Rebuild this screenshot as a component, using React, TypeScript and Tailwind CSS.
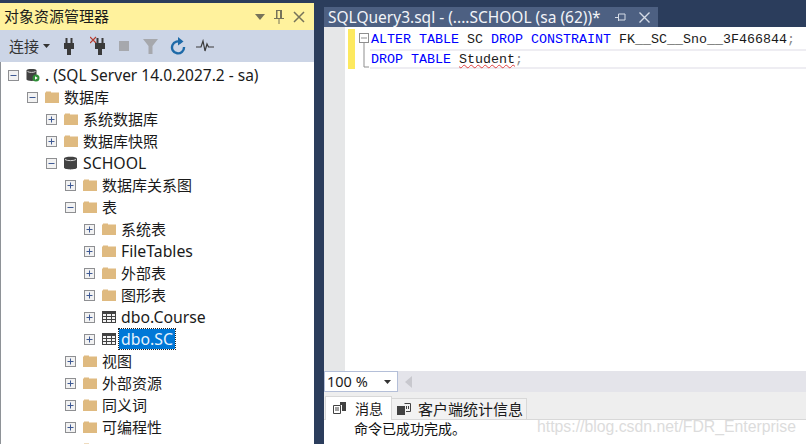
import React from "react";

const font = { fontFamily: '"Noto Sans","Noto Sans CJK SC",sans-serif' };

function Expander({ open }: { open?: boolean }) {
  return (
    <svg width="11" height="11" viewBox="0 0 11 11" className="shrink-0">
      <rect x="0.5" y="0.5" width="10" height="10" fill="#f2f2f2" stroke="#8e8f92" />
      <path d={open ? "M2.5 5.5H8.5" : "M2.5 5.5H8.5M5.5 2.5V8.5"} stroke="#3f5a94" strokeWidth="1" />
    </svg>
  );
}

function Folder() {
  return (
    <svg width="14" height="12" viewBox="0 0 14 12" className="shrink-0">
      <path d="M0 1.5H1V0.5H6V1.5H14V12H0Z" fill="#dfba80" />
    </svg>
  );
}

function Server() {
  return (
    <svg width="14" height="14" viewBox="0 0 14 14" className="shrink-0">
      <path d="M0.5 2.5C0.5 0.6 10.5 0.6 10.5 2.5V11.5C10.5 13.4 0.5 13.4 0.5 11.5Z" fill="#424242" />
      <path d="M1.5 3.5C3 4.7 8 4.7 9.5 3.5" stroke="#d8d8d8" strokeWidth="1" fill="none" />
      <circle cx="10" cy="10" r="3.5" fill="#2f8f37" />
      <path d="M9 8.2V11.8L11.8 10Z" fill="#fff" />
    </svg>
  );
}

function Db() {
  return (
    <svg width="13" height="14" viewBox="0 0 13 14" className="shrink-0">
      <path d="M0 2.5C0 0 13 0 13 2.5V11.5C13 14 0 14 0 11.5Z" fill="#424242" />
      <path d="M1 3.5C3 5 10 5 12 3.5" stroke="#d8d8d8" strokeWidth="1" fill="none" />
    </svg>
  );
}

function TableIcon() {
  return (
    <svg width="14" height="12" viewBox="0 0 14 12" className="shrink-0">
      <rect x="0" y="0" width="14" height="12" fill="#424242" />
      <path d="M1 3H4V5H1ZM5 3H9V5H5ZM10 3H13V5H10ZM1 6H4V8H1ZM5 6H9V8H5ZM10 6H13V8H10ZM1 9H4V11H1ZM5 9H9V11H5ZM10 9H13V11H10Z" fill="#f4f4f4" />
    </svg>
  );
}

type Row = { level: number; label: string; open?: boolean; icon: "db" | "server" | "folder" | "table"; selected?: boolean; latin?: boolean };

const rows: Row[] = [
  { level: 0, label: ". (SQL Server 14.0.2027.2 - sa)", open: true, icon: "server" },
  { level: 1, label: "数据库", open: true, icon: "folder" },
  { level: 2, label: "系统数据库", icon: "folder" },
  { level: 2, label: "数据库快照", icon: "folder" },
  { level: 2, label: "SCHOOL", open: true, icon: "db", latin: true },
  { level: 3, label: "数据库关系图", icon: "folder" },
  { level: 3, label: "表", open: true, icon: "folder" },
  { level: 4, label: "系统表", icon: "folder" },
  { level: 4, label: "FileTables", icon: "folder", latin: true },
  { level: 4, label: "外部表", icon: "folder" },
  { level: 4, label: "图形表", icon: "folder" },
  { level: 4, label: "dbo.Course", icon: "table", latin: true },
  { level: 4, label: "dbo.SC", icon: "table", selected: true, latin: true },
  { level: 3, label: "视图", icon: "folder" },
  { level: 3, label: "外部资源", icon: "folder" },
  { level: 3, label: "同义词", icon: "folder" },
  { level: 3, label: "可编程性", icon: "folder" },
  { level: 3, label: "", icon: "folder" },
];

const indent = ["pl-[7px]", "pl-[26px]", "pl-[45px]", "pl-[64px]", "pl-[83px]"];

function TreeRow({ r }: { r: Row }) {
  return (
    <div className={`flex h-[22px] shrink-0 items-center ${indent[r.level]}`}>
      <Expander open={r.open} />
      <span className="ml-[7px] flex w-[15px] justify-start">
        {r.icon === "folder" && <Folder />}
        {r.icon === "table" && <TableIcon />}
        {r.icon === "db" && <Db />}
        {r.icon === "server" && <Server />}
      </span>
      <span
        className={`whitespace-nowrap leading-[20px] ${r.latin ? "text-[15.8px]" : r.level === 0 ? "text-[15.5px]" : "text-[15px]"} ${
          r.selected ? "ml-[2px] bg-[#0078d7] px-[2px] text-[#e8f3fc] outline-1 outline-[#222] outline-dotted" : "ml-[4px] text-[#1a1a1a]"
        }`}
      >
        {r.label}
      </span>
    </div>
  );
}

function Plug({ x }: { x?: boolean }) {
  return (
    <svg width="20" height="20" viewBox="0 0 20 20" className="shrink-0">
      {x && <path d="M0 1L6 7M6 1L0 7" stroke="#b5392c" strokeWidth="1.2" />}
      <path d="M7.5 2V7M12.5 2V7" stroke="#3a3a3a" strokeWidth="2" />
      <path d="M5 7H15V13H12V19H8V13H5Z" fill="#3a3a3a" />
    </svg>
  );
}

export default function App() {
  return (
    <div className="flex h-[444px] w-[806px] overflow-hidden bg-[#2b3d5c]" style={font}>
      {/* Left panel */}
      <div className="flex h-full w-[314px] shrink-0 flex-col pt-[3px]">
        <div className="flex h-[27px] shrink-0 items-center justify-between bg-[#fff29d] pl-[4px] pr-[9px]">
          <span className="text-[15px] text-[#1a1a1a]">对象资源管理器</span>
          <div className="flex items-center gap-[9px]">
            <svg width="10" height="6" viewBox="0 0 10 6"><path d="M0 0H10L5 6Z" fill="#76735a" /></svg>
            <svg width="10" height="14" viewBox="0 0 10 14"><path d="M2 0H8V8H10V9H5.5V14H4.5V9H0V8H2ZM3.5 1V8H6V1Z" fill="#76735a" /></svg>
            <svg width="12" height="12" viewBox="0 0 12 12"><path d="M1 1L11 11M11 1L1 11" stroke="#76735a" strokeWidth="1.5" /></svg>
          </div>
        </div>
        <div className="flex h-[32px] shrink-0 items-center bg-[#ccd5e6] pl-[9px] text-[#333]">
          <span className="text-[15px]">连接</span>
          <svg width="7" height="4" viewBox="0 0 7 4" className="ml-[4px]"><path d="M0 0H7L3.5 4Z" fill="#333" /></svg>
          <span className="ml-[9px]"><Plug /></span>
          <span className="ml-[11px]"><Plug x /></span>
          <span className="ml-[9px] h-[10px] w-[10px] bg-[#a6a8ad]" />
          <svg width="15" height="16" viewBox="0 0 15 16" className="ml-[14px]"><path d="M0 1H15L9.5 8V16H5.5V8Z" fill="#a6a8ad" /></svg>
          <svg width="16" height="18" viewBox="0 0 16 18" className="ml-[12px]">
            <path d="M11.5 5.5A6 6 0 1 0 14 10" fill="none" stroke="#1e6aa8" strokeWidth="2.4" />
            <path d="M8 0L13.5 4.5L8 8.5Z" fill="#1e6aa8" />
          </svg>
          <svg width="19" height="14" viewBox="0 0 19 14" className="ml-[10px]"><path d="M0 8H5L7 2L9 12L11 5L12.5 8H18" fill="none" stroke="#3a3a3a" strokeWidth="1.2" /></svg>
        </div>
        <div className="flex min-h-0 flex-1 flex-col overflow-hidden border-l border-[#8e9297] bg-white pt-[2px]">
          {rows.map((r) => (
            <TreeRow key={r.label + r.level} r={r} />
          ))}
        </div>
      </div>

      {/* Splitter */}
      <div className="w-[10px] shrink-0" />

      {/* Right */}
      <div className="flex h-full min-w-0 flex-1 flex-col">
        <div className="flex h-[27px] shrink-0 items-end">
          <div className="flex h-[20px] w-[334px] items-center bg-[#4d6082] pl-[4px] text-white">
            <span className="whitespace-nowrap text-[15.5px] leading-[20px] text-[#f2f4f8]">SQLQuery3.sql - (....SCHOOL (sa (62))*</span>
            <svg width="11" height="9" viewBox="0 0 11 9" className="ml-[14px]"><path d="M0 4.5H3M3.5 1V8M3.5 1H10V7H3.5" fill="none" stroke="#d5dbe6" strokeWidth="1" /></svg>
            <svg width="11" height="11" viewBox="0 0 11 11" className="ml-[13px]"><path d="M0.5 0.5L10.5 10.5M10.5 0.5L0.5 10.5" stroke="#d5dbe6" strokeWidth="1.4" /></svg>
          </div>
        </div>
        <div className="flex min-h-0 flex-1 bg-white">
          <div className="w-[21px] shrink-0 bg-[#e6e7e8]" />
          <div className="ml-[3px] mt-[2px] h-[40px] w-[7px] shrink-0 bg-[#fde95f]" />
          <div className="relative mt-[3px] min-w-0 flex-1">
            <div className="ml-[16px] flex h-[19px] items-center">
              <pre className="whitespace-pre text-[13.33px] leading-[19px] text-[#1a1a1a]" style={{ fontFamily: '"Liberation Mono",monospace' }}>
                <span className="text-[#0000ff]">ALTER TABLE</span> SC <span className="text-[#0000ff]">DROP CONSTRAINT</span> FK__SC__Sno__3F466844<span className="text-[#888]">;</span>
              </pre>
            </div>
            <div className="ml-[15px] h-[20px] border-y-2 border-[#eeedf2] pl-[1px]">
              <pre className="whitespace-pre text-[13.33px] leading-[17px] text-[#1a1a1a]" style={{ fontFamily: '"Liberation Mono",monospace' }}>
                <span className="text-[#0000ff]">DROP TABLE</span> <span className="underline decoration-[#e04040] decoration-wavy decoration-1">Student</span><span className="text-[#888]">;</span>
              </pre>
            </div>
            <svg width="11" height="39" viewBox="0 0 11 39" className="absolute left-[4px] top-0">
              <rect x="0.5" y="3.5" width="9" height="9" fill="#fff" stroke="#8f8f8f" />
              <path d="M2 8H8M5 13V37H10" fill="none" stroke="#8f8f8f" />
            </svg>
          </div>
        </div>
        <div className="flex h-[21px] shrink-0 items-center bg-[#e4e4ea]">
          <div className="flex h-[21px] w-[74px] items-center justify-between border border-[#b4bfd8] bg-white pl-[2px] pr-[6px]">
            <span className="text-[14.5px] text-[#1a1a1a]">100 %</span>
            <svg width="7" height="4" viewBox="0 0 7 4"><path d="M0 0H7L3.5 4Z" fill="#333" /></svg>
          </div>
          <svg width="8" height="12" viewBox="0 0 8 12" className="ml-[7px]"><path d="M7 0V12L0 6Z" fill="#c8c8ce" /></svg>
        </div>
        <div className="flex h-[28px] shrink-0 items-end border-b border-[#d8d8d8] bg-[#eeeeee]">
          <div className="-mb-[1px] ml-[1px] flex h-[24px] w-[67px] items-start border border-b-0 border-[#d8d8d8] bg-white pl-[7px] pt-[2px]">
            <svg width="14" height="14" viewBox="0 0 14 14" className="mt-[2px]"><path d="M0.5 4.5H7.5V12.5H0.5ZM2 7H6M2 9H6" fill="none" stroke="#424242" /><path d="M7 1H13V10H9V4H7Z" fill="#424242" /></svg>
            <span className="ml-[8px] text-[14px] leading-[20px] text-[#1a1a1a]">消息</span>
          </div>
          <div className="-mb-[1px] flex h-[22px] w-[135px] items-center border border-l-0 border-[#d8d8d8] bg-[#f2f2f2] pl-[5px]">
            <svg width="14" height="14" viewBox="0 0 14 14"><path d="M0 4H8V13H0Z" fill="#424242" /><path d="M7.5 1.5H13.5V9.5H9M9.5 4V7M11.5 4V7" fill="none" stroke="#424242" /></svg>
            <span className="ml-[7px] whitespace-nowrap text-[15px] text-[#1a1a1a]">客户端统计信息</span>
          </div>
        </div>
        <div className="relative h-[24px] shrink-0 bg-white pl-[30px]">
          <span className="block text-[14px] leading-[18px] text-[#111]">命令已成功完成。</span>
          <span className="absolute left-[213px] top-[-4px] whitespace-nowrap text-[15.8px] leading-[22px] text-[#dcdcdc]" style={{ fontFamily: '"Liberation Sans",sans-serif' }}>https://blog.csdn.net/FDR_Enterprise</span>
        </div>
      </div>
    </div>
  );
}
